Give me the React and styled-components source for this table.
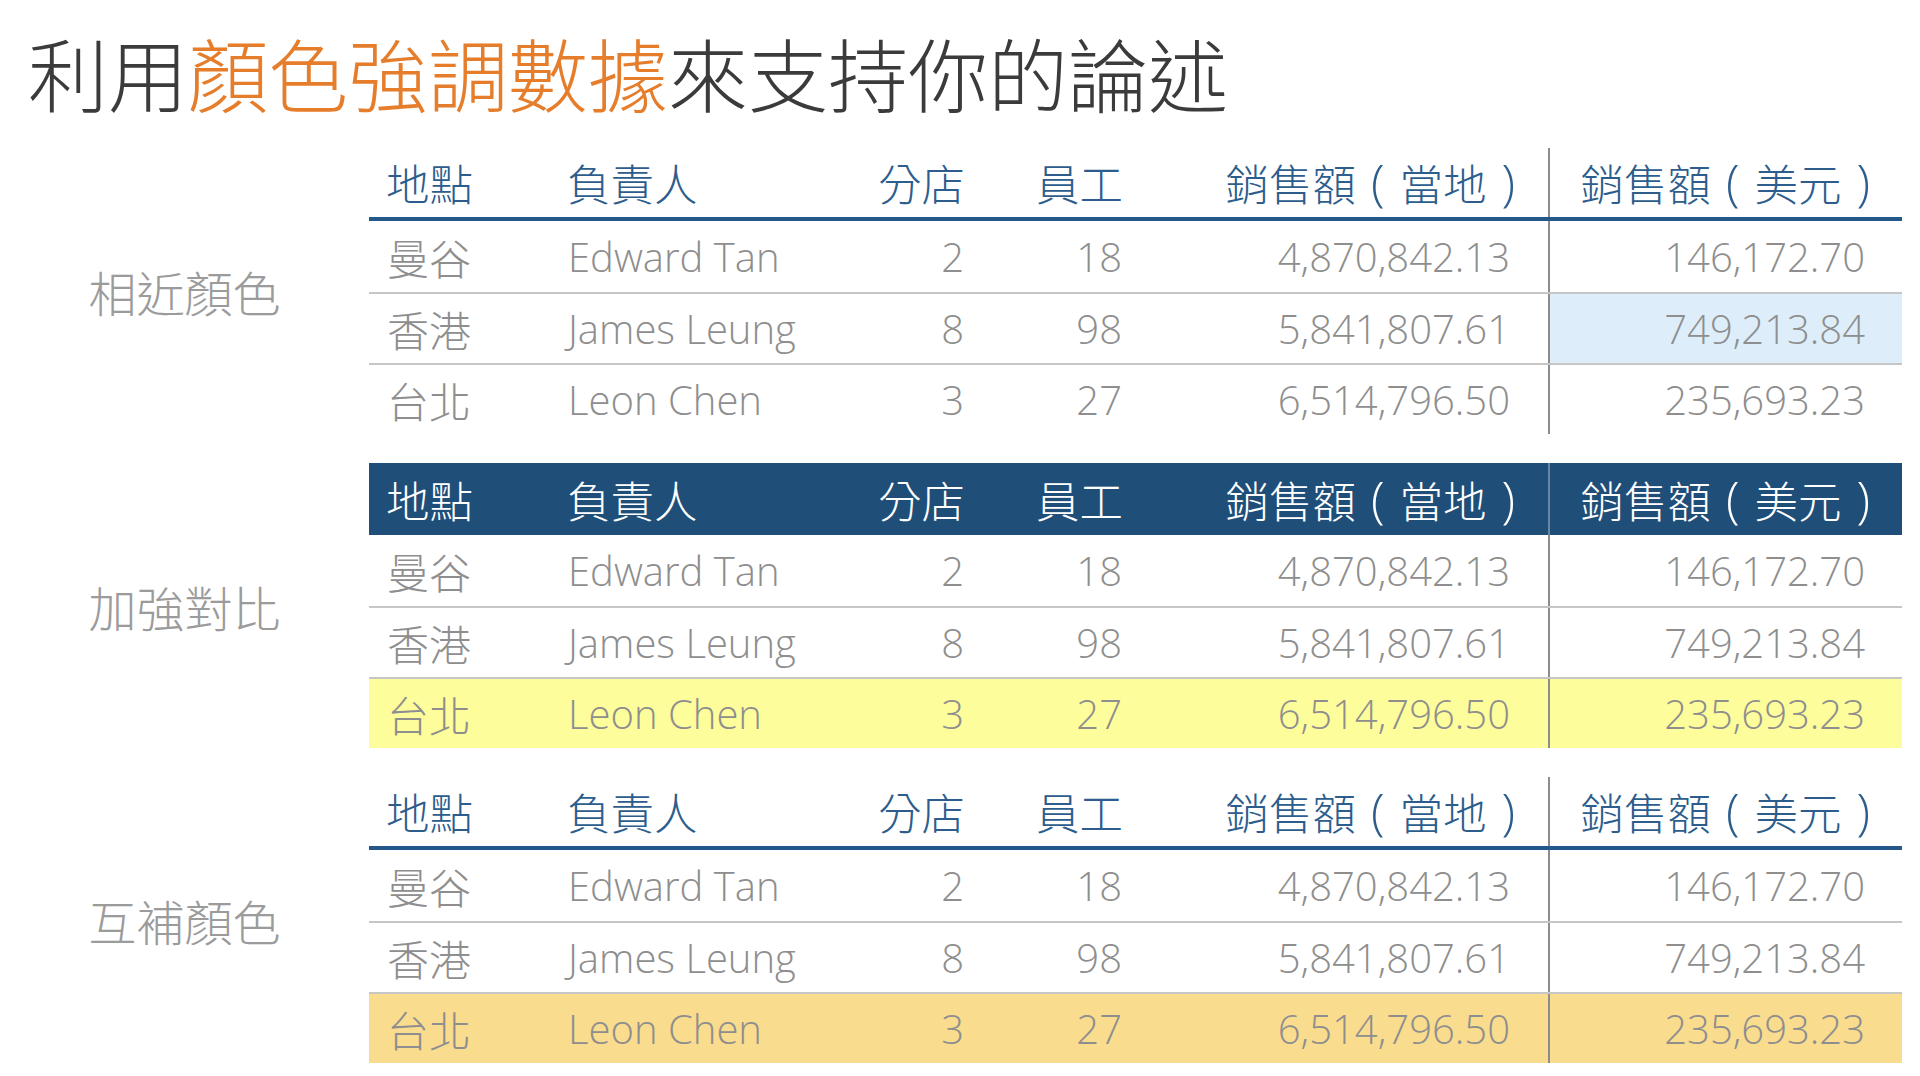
import React from 'react';
import styled, { createGlobalStyle } from 'styled-components';

const CJK = `"Noto Sans CJK TC", "Noto Sans CJK SC", sans-serif`;
const LATIN = `"Open Sans", "Noto Sans CJK TC", sans-serif`;

const GlobalStyle = createGlobalStyle`
  html, body { margin: 0; padding: 0; background: #ffffff; }
  body { width: 1920px; height: 1076px; overflow: hidden; }
  * { box-sizing: border-box; }
`;

const Page = styled.div`
  display: flex;
  flex-direction: column;
  padding-top: 23px;
`;

const Title = styled.h1`
  margin: 0;
  padding-left: 28px;
  font-family: ${CJK};
  font-weight: 300;
  font-size: 80px;
  line-height: 96px;
  color: #3b3b3b;
`;

const Accent = styled.span`
  color: #e57d2b;
`;

const Sections = styled.div`
  display: flex;
  flex-direction: column;
  gap: 29px;
  margin-top: 29px;
  padding-right: 18px;
`;

const Section = styled.section`
  display: grid;
  grid-template-columns: 369px 1fr;
  align-items: center;
`;

const Label = styled.div`
  justify-self: center;
  font-family: ${CJK};
  font-weight: 300;
  font-size: 48px;
  color: #9b9b9b;
`;

const Table = styled.div`
  display: flex;
  flex-direction: column;
`;

const COLS = '180px 335px 100px 158px 406px 354px';

const HeadRow = styled.div`
  display: grid;
  grid-template-columns: ${COLS};
  height: ${p => (p.$filled ? 72 : 73)}px;
  background: ${p => (p.$filled ? '#1f4e79' : 'transparent')};
  border-bottom: ${p => (p.$filled ? 'none' : '4px solid #24578a')};
`;

const Row = styled.div`
  display: grid;
  grid-template-columns: ${COLS};
  height: 71px;
  background: ${p => p.$bg || 'transparent'};
  border-top: ${p => (p.$first ? 'none' : '2px solid #c6c6c6')};
`;

const Cell = styled.div`
  display: flex;
  align-items: center;
  justify-content: ${p => (p.$right ? 'flex-end' : 'flex-start')};
  padding-left: ${p => p.$pl || 0}px;
  padding-right: ${p => p.$pr || 0}px;
  border-left: ${p => (p.$divider ? `2px solid ${p.$dividerColor || '#8c8c8c'}` : 'none')};
  background: ${p => p.$bg || 'transparent'};
  white-space: nowrap;
`;

const HeadText = styled.span`
  font-family: ${CJK};
  font-weight: 300;
  font-size: 43.5px;
  color: ${p => (p.$light ? '#ffffff' : '#2c5d8c')};
`;

const Paren = styled.span`
  display: inline-block;
  width: 0.87em;
  text-align: center;
  font-family: "Open Sans", sans-serif;
  font-weight: 300;
  font-size: 1.15em;
  line-height: 1;
`;

const PlaceText = styled.span`
  font-family: ${CJK};
  font-weight: 300;
  font-size: 42px;
  color: #8e8e8e;
`;

const DataText = styled.span`
  font-family: ${LATIN};
  font-weight: 300;
  font-size: 40px;
  color: #8e8e8e;
`;

const HEAD = [
  ['地點'],
  ['負責人'],
  ['分店'],
  ['員工'],
  ['銷售額', '當地'],
  ['銷售額', '美元'],
];

const ROWS = [
  ['曼谷', 'Edward Tan', '2', '18', '4,870,842.13', '146,172.70'],
  ['香港', 'James Leung', '8', '98', '5,841,807.61', '749,213.84'],
  ['台北', 'Leon Chen', '3', '27', '6,514,796.50', '235,693.23'],
];

const headPad = [
  { pl: 17 },
  { pl: 18 },
  { pr: 19, right: true },
  { pr: 19, right: true },
  { pr: 18, right: true },
  { pr: 17, right: true, divider: true },
];

const dataPad = [
  { pl: 18 },
  { pl: 19 },
  { pr: 20, right: true },
  { pr: 20, right: true },
  { pr: 38, right: true },
  { pr: 37, right: true, divider: true },
];

function DataTable({ filled, rowBg, cellBg }) {
  return (
    <Table>
      <HeadRow $filled={filled}>
        {HEAD.map((h, i) => (
          <Cell
            key={i}
            $pl={headPad[i].pl}
            $pr={headPad[i].pr}
            $right={headPad[i].right}
            $divider={headPad[i].divider}
            $dividerColor={filled ? '#6b86a0' : '#8c8c8c'}
          >
            <HeadText $light={filled}>
              {h[0]}
              {h[1] && (
                <>
                  <Paren>(</Paren>
                  {h[1]}
                  <Paren>)</Paren>
                </>
              )}
            </HeadText>
          </Cell>
        ))}
      </HeadRow>
      {ROWS.map((r, ri) => (
        <Row key={r[0]} $first={ri === 0} $bg={rowBg && rowBg[ri]}>
          {r.map((v, i) => (
            <Cell
              key={i}
              $pl={dataPad[i].pl}
              $pr={dataPad[i].pr}
              $right={dataPad[i].right}
              $divider={dataPad[i].divider}
              $bg={cellBg && cellBg[ri] && cellBg[ri][i]}
            >
              {i === 0 ? <PlaceText>{v}</PlaceText> : <DataText>{v}</DataText>}
            </Cell>
          ))}
        </Row>
      ))}
    </Table>
  );
}

export default function App() {
  return (
    <>
      <GlobalStyle />
      <Page>
        <Title>
          利用<Accent>顏色強調數據</Accent>來支持你的論述
        </Title>
        <Sections>
          <Section>
            <Label>相近顏色</Label>
            <DataTable cellBg={{ 1: { 5: '#ddeefa' } }} />
          </Section>
          <Section>
            <Label>加強對比</Label>
            <DataTable filled rowBg={{ 2: '#fefd9b' }} />
          </Section>
          <Section>
            <Label>互補顏色</Label>
            <DataTable rowBg={{ 2: '#f9dc8e' }} />
          </Section>
        </Sections>
      </Page>
    </>
  );
}
